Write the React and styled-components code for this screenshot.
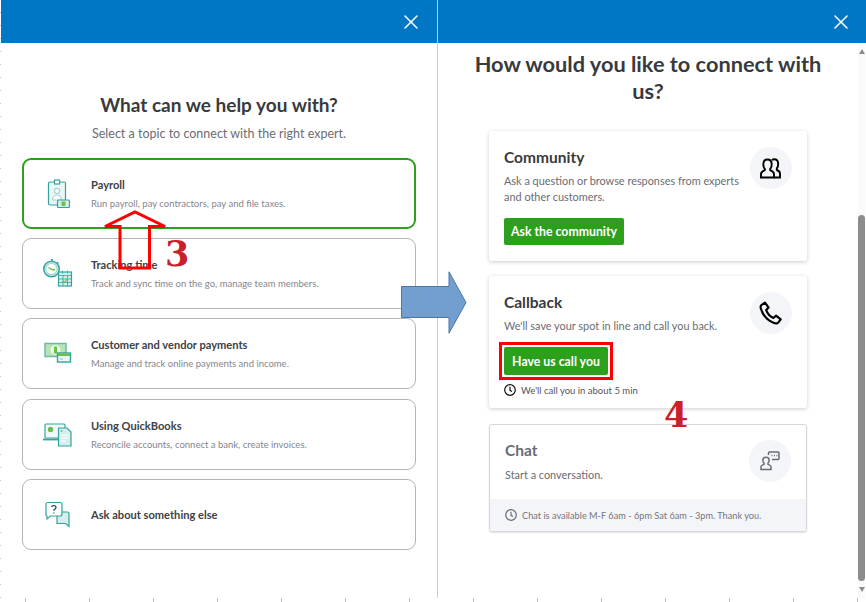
import styled, { createGlobalStyle } from 'styled-components';
import { X } from 'lucide-react';

const GlobalStyle = createGlobalStyle`
    html, body {
        margin:0;
        padding:0;
        background:#fff;
    }
    * {
        box-sizing:border-box;
    }
`

const Page = styled.div`
    position:relative;
    width:866px;
    height:602px;
    overflow:hidden;
    padding-left:1px;
    display:flex;
    flex-direction:column;
    font-family:Lato, "Open Sans", sans-serif;
    color:#393a3d;
    background:repeating-linear-gradient(180deg, #c4c4c4 0 1px, #fff 1px 13px) 0 12px / 1px 100% no-repeat;
`
const Panels = styled.div`
    display:flex;
    height:598px;
`
const Ticks = styled.div`
    height:4px;
    background:repeating-linear-gradient(90deg, transparent 0 24px, #bdbdbd 24px 25px, transparent 25px 64px);
`
const LeftPanel = styled.section`
    width:437px;
    border-right:1px solid #c9ccd1;
    display:flex;
    flex-direction:column;
`
const RightPanel = styled.section`
    flex:1;
    display:flex;
    flex-direction:column;
    min-width:0;
`
const Header = styled.header`
    height:43px;
    flex:none;
    background:#0077c5;
    display:flex;
    align-items:center;
    justify-content:flex-end;
    padding-right:${(p) => p.$right}px;
    color:#fff;
`
const LeftBody = styled.div`
    padding:50px 21px 0 21px;
    display:flex;
    flex-direction:column;
    align-items:center;
`
const Title = styled.h1`
    margin:0;
    font-size:19px;
    line-height:24px;
    font-weight:700;
    text-align:center;
    color:#393a3d;
`
const Subtitle = styled.p`
    margin:8px 0 15px;
    font-size:12.5px;
    line-height:18px;
    color:#6b6c72;
`
const TopicList = styled.div`
    width:100%;
    display:flex;
    flex-direction:column;
    gap:9.2px;
`
const Topic = styled.div`
    height:71px;
    display:flex;
    align-items:center;
    gap:17px;
    padding-left:${(p) => (p.$active ? 18 : 19)}px;
    border-radius:9px;
    border:${(p) => (p.$active ? '2px solid #2ca01c' : '1px solid #b4b5b8')};
`
const TopicIcon = styled.svg`
    width:32px;
    height:32px;
    flex:none;
`
const TopicText = styled.div`
    display:flex;
    flex-direction:column;
    gap:5px;
    padding-top:1px;
`
const TopicTitle = styled.div`
    font-size:11.1px;
    line-height:14px;
    font-weight:700;
    color:#404145;
`
const TopicDesc = styled.div`
    font-size:9.5px;
    line-height:13px;
    color:#85868c;
`
const RightRow = styled.div`
    flex:1;
    display:flex;
    min-height:0;
`
const RightBody = styled.div`
    flex:1;
    padding:8px 0 0;
    display:flex;
    flex-direction:column;
    align-items:center;
`
const BigTitle = styled.h2`
    margin:0 0 26px;
    width:360px;
    font-size:21.75px;
    line-height:27px;
    font-weight:700;
    text-align:center;
    color:#393a3d;
`
const CardList = styled.div`
    width:318px;
    display:flex;
    flex-direction:column;
    gap:15px;
`
const Card = styled.article`
    background:#fff;
    border-radius:3px;
    box-shadow:0 1px 4px rgba(0,0,0,0.2);
    padding:${(p) => p.$pad || '15px 15px 16px'};
    display:flex;
    flex-direction:column;
`
const DisabledCard = styled.article`
    height:108px;
    margin-top:1px;
    border:1px solid #d4d7dc;
    border-radius:3px;
    box-shadow:0 1px 2px rgba(0,0,0,0.12);
    display:flex;
    flex-direction:column;
    overflow:hidden;
`
const CardTop = styled.div`
    display:flex;
    justify-content:space-between;
    align-items:flex-start;
`
const CardTitle = styled.h3`
    margin:0;
    font-size:15.5px;
    line-height:22px;
    font-weight:700;
    color:${(p) => (p.$muted ? '#6b6c72' : '#393a3d')};
`
const CardDesc = styled.p`
    margin:${(p) => p.$top}px 0 0;
    width:${(p) => p.$width || 'auto'};
    font-size:10.9px;
    line-height:15.5px;
    color:#6b6c72;
`
const CircleIcon = styled.div`
    width:42px;
    height:42px;
    flex:none;
    border-radius:50%;
    background:#f4f5f8;
    display:flex;
    align-items:center;
    justify-content:center;
    margin:${(p) => p.$margin};
`
const GreenButton = styled.div`
    display:inline-flex;
    align-items:center;
    justify-content:center;
    width:${(p) => p.$width}px;
    height:${(p) => p.$height}px;
    background:#2ca01c;
    border-radius:2px;
    color:#fff;
    font-size:12.3px;
    font-weight:700;
`
const ButtonRow = styled.div`
    margin-top:${(p) => p.$top}px;
    display:flex;
`
const Highlight = styled.div`
    display:flex;
    margin:-5px;
    padding:2px;
    border:3px solid #f00;
`
const Note = styled.div`
    display:flex;
    align-items:center;
    gap:5px;
    margin-top:${(p) => p.$top}px;
    font-size:9.5px;
    line-height:13px;
    color:#55565b;
`
const ChatTop = styled.div`
    flex:1;
    padding:14px 15px 0;
`
const ChatFoot = styled.div`
    height:32px;
    background:#f4f5f8;
    display:flex;
    align-items:center;
    gap:5px;
    padding-left:15px;
    font-size:9.2px;
    color:#75767c;
`
const Scrollbar = styled.div`
    width:7px;
    margin-right:1px;
    background:#fafafa;
    display:flex;
    flex-direction:column;
    align-items:center;
`
const ScrollArrow = styled.div`
    width:0;
    height:0;
    border-left:3.5px solid transparent;
    border-right:3.5px solid transparent;
    ${(p) => (p.$down ? 'border-top:5px solid #8a8a8a;' : 'border-bottom:5px solid #8a8a8a;')}
    margin:${(p) => p.$margin};
`
const ScrollThumb = styled.div`
    width:7px;
    flex:1;
    border-radius:4px;
    background:#8c8c8c;
    margin-top:${(p) => p.$top}px;
`
const Marker = styled.div`
    position:absolute;
    left:${(p) => p.$x}px;
    top:${(p) => p.$y}px;
    font-family:"DejaVu Serif", serif;
    font-weight:700;
    font-size:35px;
    line-height:34px;
    color:#c9202a;
`
const Overlay = styled.svg`
    position:absolute;
    left:${(p) => p.$x}px;
    top:${(p) => p.$y}px;
`

const PayrollIcon = () => (
    <TopicIcon viewBox="0 0 32 32" fill="none" stroke="#35a39c" strokeWidth="1.2">
        <rect x="6.5" y="4" width="17" height="23" rx="1.5" fill="#eaf7f6" />
        <rect x="12.5" y="2" width="5" height="4" fill="#fff" />
        <circle cx="15" cy="13" r="2.6" stroke="#a5d5d2" fill="#fff" />
        <path d="M10.5 22c0-3 2-5 4.5-5s4.5 2 4.5 5z" stroke="#a5d5d2" fill="#fff" />
        <rect x="15.5" y="22" width="12" height="7.5" rx="1" fill="#d4efee" />
        <rect x="19.5" y="23.5" width="4" height="4.5" fill="#6cc04a" stroke="none" />
    </TopicIcon>
)

const TimeIcon = () => (
    <TopicIcon viewBox="0 0 32 32" fill="none" stroke="#35a39c" strokeWidth="1.2">
        <circle cx="9.5" cy="11" r="7.8" fill="#d4efee" strokeWidth="1.5" />
        <circle cx="9.5" cy="11" r="5.6" fill="#fff" stroke="#a5d5d2" />
        <path d="M9 1.5h2M10 1.5v2M15 3.8l1.5 1.5" />
        <path d="M6.5 9.5l3.5 2 3 .5" stroke="#6cc04a" strokeWidth="1.4" />
        <rect x="16.5" y="14" width="13" height="14" fill="#d4efee" />
        <path d="M16.5 17.5h13M20.5 12.5v3M25.5 12.5v3M16.5 21h13M16.5 24.5h13M21 17.5V28M25.5 17.5V28" strokeWidth="0.8" />
        <path d="M20.5 23l2 1.5 3-4" stroke="#6cc04a" strokeWidth="1.2" />
    </TopicIcon>
)

const MoneyIcon = () => (
    <TopicIcon viewBox="0 0 32 32" fill="none" stroke="#35a39c" strokeWidth="1.2">
        <rect x="3" y="5.5" width="21" height="13" fill="#b8e3b5" stroke="#6cb9ae" strokeWidth="1.5" />
        <ellipse cx="13.5" cy="12" rx="5" ry="5" fill="#eaf7e6" stroke="none" />
        <rect x="12" y="8.5" width="3" height="7" fill="#6cc04a" stroke="none" />
        <rect x="15.5" y="15" width="13" height="9" fill="#eaf7f6" strokeWidth="1.4" />
        <rect x="16" y="15.5" width="12" height="2.5" fill="#6cc04a" stroke="none" />
        <path d="M18 21h3" stroke="#8fd0ca" />
    </TopicIcon>
)

const BooksIcon = () => (
    <TopicIcon viewBox="0 0 32 32" fill="none" stroke="#35a39c" strokeWidth="1.2">
        <rect x="3" y="6" width="20" height="14" rx="1" fill="#f1fafa" />
        <path d="M1 21.5h20" strokeWidth="1.8" />
        <circle cx="8.5" cy="11.5" r="2.7" fill="#6cc04a" stroke="none" />
        <path d="M16.5 10h8.5l4 4v14h-12.5z" fill="#d4efee" />
        <circle cx="19.5" cy="13" r="0.9" fill="#6cc04a" stroke="none" />
        <path d="M19 17h8M19 20h8M19 23h5" stroke="#fff" />
    </TopicIcon>
)

const QuestionIcon = () => (
    <TopicIcon viewBox="0 0 32 32" fill="none" stroke="#35a39c" strokeWidth="1.2">
        <path d="M15 14h10.5a1.500 1.500 0 0 1 1.500 1.500v9.500l0 3.500-3.500-3H15z" fill="#d4efee" />
        <path d="M6 4.500h12a2 2 0 0 1 2 2v9.500a2 2 0 0 1-2 2H8.500L5 21v-3a1 1 0 0 1-1-1V6.500a2 2 0 0 1 2-2z" fill="#fff" />
        <path d="M9.500 9c.5-2 4.500-2 4.500.5 0 1.600-2.200 1.600-2.200 3.200M11.800 14.500v1" stroke="#2f4d5c" strokeWidth="1.3" />
    </TopicIcon>
)

const PeopleIcon = () => (
    <svg width="24" height="24" viewBox="0 0 24 24" fill="none" stroke="#000" strokeWidth="1.9">
        <path d="M2 21.500v-3.500c0-2 2-3 3.800-3.800V13c-1-1-1.500-2.200-1.500-4.500C4.300 5.500 6 3.500 8.500 3.500s4.200 2 4.200 5c0 2.300-.5 3.500-1.500 4.500v1.200c1.800.8 3.800 1.800 3.800 3.800v3.500z" />
        <path d="M12.800 4c.8-.5 1.500-.7 2.400-.7 2.500 0 4 2 4 4.800 0 2.100-.5 3.400-1.400 4.400v1.500c1.800.7 3.200 1.800 3.200 3.500v4h-6" />
    </svg>
)

const PhoneIcon = () => (
    <svg width="24" height="24" viewBox="1 1 22 22" fill="none" stroke="#000" strokeWidth="2" strokeLinejoin="round">
        <path d="M6.500 2.500 3.200 4.700c-1 .8-.9 2-.4 3.500 1.900 6 6.500 11 12 13 1.700.6 3 .5 3.800-.4l2.300-2.900-4.300-3.400-2.400 2c-2.800-1.200-5.600-4.400-6.600-7.200l2.200-2.300z" />
    </svg>
)

const AgentIcon = () => (
    <svg width="24" height="24" viewBox="0 0 24 24" fill="none" stroke="#6b6c72" strokeWidth="1.500">
        <path d="M10.500 6V4a1 1 0 0 1 1-1h8.500a1 1 0 0 1 1 1v5.500a1 1 0 0 1-1 1h-6" />
        <path d="M13.500 6.500h1M16 6.500h1M18.500 6.500h1" strokeWidth="1.400" />
        <path d="M3 20.500v-3c0-1 2-1.700 3-2.200v-1.300c-.7-.7-1.200-1.700-1.200-2.800 0-1.800 1.300-3 3.200-3s3.200 1.200 3.200 3c0 1.100-.5 2.100-1.200 2.800v1.300c1 .5 3 1.200 3 2.200v3z" />
    </svg>
)

const ClockIcon = ({ color }) => (
    <svg width="12" height="12" viewBox="0 0 12 12" fill="none" stroke={color} strokeWidth="1.200">
        <circle cx="6" cy="6" r="5.300" />
        <path d="M6 2.800V6.300l2 1.200" />
    </svg>
)

const App = () => {
    return (
        <Page>
            <GlobalStyle />
            <Panels>
                <LeftPanel>
                    <Header $right={14}>
                        <X size={24} strokeWidth={1.5} />
                    </Header>
                    <LeftBody>
                        <Title>What can we help you with?</Title>
                        <Subtitle>Select a topic to connect with the right expert.</Subtitle>
                        <TopicList>
                            <Topic $active>
                                <PayrollIcon />
                                <TopicText>
                                    <TopicTitle>Payroll</TopicTitle>
                                    <TopicDesc>Run payroll, pay contractors, pay and file taxes.</TopicDesc>
                                </TopicText>
                            </Topic>
                            <Topic>
                                <TimeIcon />
                                <TopicText>
                                    <TopicTitle>Tracking time</TopicTitle>
                                    <TopicDesc>Track and sync time on the go, manage team members.</TopicDesc>
                                </TopicText>
                            </Topic>
                            <Topic>
                                <MoneyIcon />
                                <TopicText>
                                    <TopicTitle>Customer and vendor payments</TopicTitle>
                                    <TopicDesc>Manage and track online payments and income.</TopicDesc>
                                </TopicText>
                            </Topic>
                            <Topic>
                                <BooksIcon />
                                <TopicText>
                                    <TopicTitle>Using QuickBooks</TopicTitle>
                                    <TopicDesc>Reconcile accounts, connect a bank, create invoices.</TopicDesc>
                                </TopicText>
                            </Topic>
                            <Topic>
                                <QuestionIcon />
                                <TopicText>
                                    <TopicTitle>Ask about something else</TopicTitle>
                                </TopicText>
                            </Topic>
                        </TopicList>
                    </LeftBody>
                </LeftPanel>
                <RightPanel>
                    <Header $right={13}>
                        <X size={24} strokeWidth={1.5} />
                    </Header>
                    <RightRow>
                        <RightBody>
                            <BigTitle>How would you like to connect with us?</BigTitle>
                            <CardList>
                                <Card>
                                    <CardTop>
                                        <div>
                                            <CardTitle>Community</CardTitle>
                                            <CardDesc $top={5} $width="240px">Ask a question or browse responses from experts and other customers.</CardDesc>
                                        </div>
                                        <CircleIcon $margin="1px 0 0"><PeopleIcon /></CircleIcon>
                                    </CardTop>
                                    <ButtonRow $top={14}>
                                        <GreenButton $width={120} $height={27}>Ask the community</GreenButton>
                                    </ButtonRow>
                                </Card>
                                <Card $pad="15px 15px 11.5px">
                                    <CardTop>
                                        <div>
                                            <CardTitle>Callback</CardTitle>
                                            <CardDesc $top={5}>We'll save your spot in line and call you back.</CardDesc>
                                        </div>
                                        <CircleIcon $margin="1px 0 -11px"><PhoneIcon /></CircleIcon>
                                    </CardTop>
                                    <ButtonRow $top={13.5}>
                                        <Highlight>
                                            <GreenButton $width={104} $height={28}>Have us call you</GreenButton>
                                        </Highlight>
                                    </ButtonRow>
                                    <Note $top={8.5}>
                                        <ClockIcon color="#111" />
                                        We'll call you in about 5 min
                                    </Note>
                                </Card>
                                <DisabledCard>
                                    <ChatTop>
                                        <CardTop>
                                            <div>
                                                <CardTitle $muted>Chat</CardTitle>
                                                <CardDesc $top={6}>Start a conversation.</CardDesc>
                                            </div>
                                            <CircleIcon $margin="1px 0 0"><AgentIcon /></CircleIcon>
                                        </CardTop>
                                    </ChatTop>
                                    <ChatFoot>
                                        <ClockIcon color="#6b6c72" />
                                        Chat is available M-F 6am - 6pm Sat 6am - 3pm. Thank you.
                                    </ChatFoot>
                                </DisabledCard>
                            </CardList>
                        </RightBody>
                        <Scrollbar>
                            <ScrollArrow $margin="6px 0 0" />
                            <ScrollThumb $top={161} />
                            <ScrollArrow $down $margin="6px 0 6px" />
                        </Scrollbar>
                    </RightRow>
                </RightPanel>
            </Panels>
            <Ticks />

            <Overlay $x={102} $y={210} width="66" height="62" viewBox="0 0 66 62" fill="none" stroke="#f00" strokeWidth="3">
                <path d="M3 16.500 33 2l30 14.500H47.500V58H18V16.500z" />
            </Overlay>
            <Marker $x={165} $y={237}>3</Marker>
            <Overlay $x={401} $y={271} width="66" height="63" viewBox="0 0 66 63">
                <path d="M.5 15.500H48V.8l17 30.700-17 30.700V46.500H.5z" fill="#739fd0" stroke="#4a76a8" />
            </Overlay>
            <Marker $x={664} $y={398}>4</Marker>
        </Page>
    )
}

export default App
